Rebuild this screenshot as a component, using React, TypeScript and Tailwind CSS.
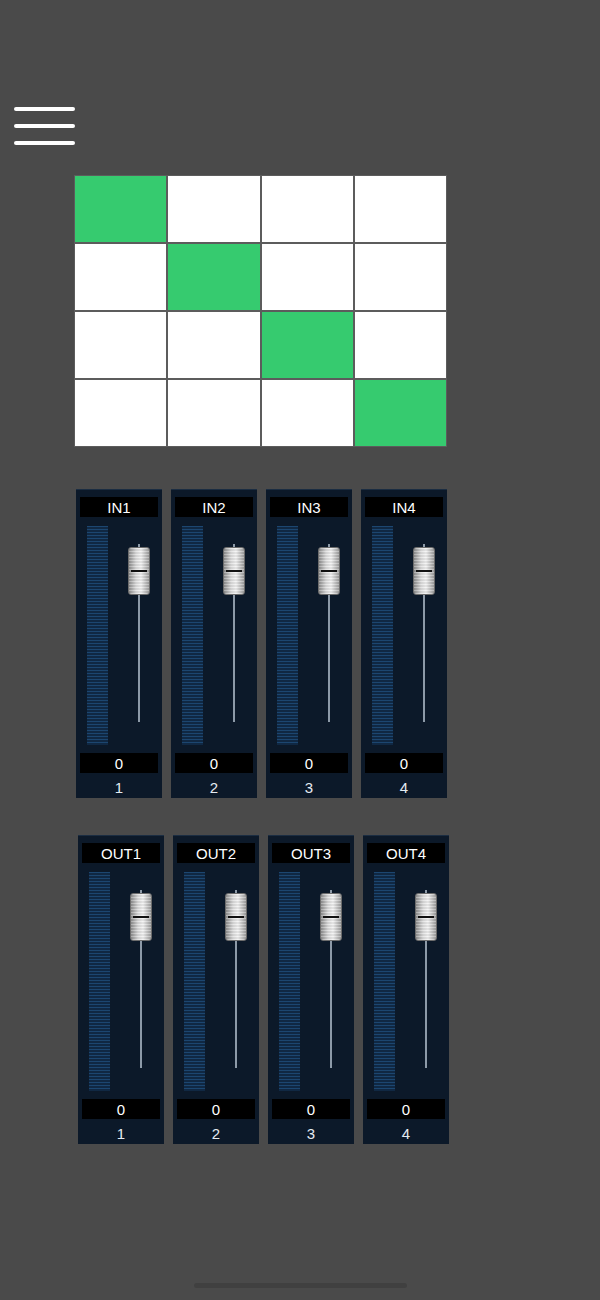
import React from "react";

const font = { fontFamily: '"Liberation Sans", Arial, sans-serif' };

function Strip({ label, num }: { label: string; num: number }) {
  return (
    <div className="flex flex-col w-[86px] h-[309px] bg-[#0c1929] border-t border-[#1b2d42] px-[4px] pt-[7px]">
      <div className="h-[20px] bg-black flex items-center justify-center text-white text-[15px] leading-none">
        {label}
      </div>
      <div className="flex flex-row h-[219px] mt-[9px]">
        <div className="ml-[7px] w-[21px] h-full bg-[repeating-linear-gradient(to_bottom,#1c4670_0px,#1c4670_1px,#102843_1px,#102843_3px)]" />
        <div className="relative ml-[20px] w-[22px] h-full">
          <div className="absolute left-[10px] top-[18px] w-[2px] h-[178px] bg-[#8d9aa8]" />
          <div className="absolute left-0 top-[21px] w-[22px] h-[48px] rounded-[3px] border border-[#6c6c6c] bg-[repeating-linear-gradient(to_bottom,rgba(255,255,255,0.25)_0px,rgba(255,255,255,0.25)_1px,rgba(0,0,0,0.06)_1px,rgba(0,0,0,0.06)_3px),linear-gradient(to_right,#8e8e8e,#dcdcdc_35%,#f2f2f2_60%,#a0a0a0)] flex items-start justify-center">
            <div className="mt-[22px] w-[16px] h-[2px] bg-[#111]" />
          </div>
        </div>
      </div>
      <div className="mt-[8px] h-[20px] bg-black flex items-center justify-center text-white text-[15px] leading-none">
        0
      </div>
      <div className="h-[25px] pt-[4px] flex items-center justify-center text-[#e4ebf2] text-[15px] leading-none">
        {num}
      </div>
    </div>
  );
}

export default function App() {
  const n = [0, 1, 2, 3];
  return (
    <div className="w-[600px] h-[1300px] bg-[#4a4a4a] flex flex-col" style={font}>
      <div className="ml-[14px] mt-[107px] flex flex-col gap-[13px] w-[61px]">
        <div className="h-[4px] rounded-full bg-white" />
        <div className="h-[4px] rounded-full bg-white" />
        <div className="h-[4px] rounded-full bg-white" />
      </div>
      <div className="ml-[74px] mt-[30px] w-[373px] h-[272px] grid grid-cols-4 grid-rows-4 gap-[2px] bg-[#5c5c5c] border border-[#5c5c5c]">
        {n.map((r) =>
          n.map((c) => (
            <div key={`${r}-${c}`} className={r === c ? "bg-[#36cb6f]" : "bg-white"} />
          ))
        )}
      </div>
      <div className="ml-[76px] mt-[42px] flex flex-row gap-[9px]">
        {n.map((i) => (
          <Strip key={i} label={`IN${i + 1}`} num={i + 1} />
        ))}
      </div>
      <div className="ml-[78px] mt-[37px] flex flex-row gap-[9px]">
        {n.map((i) => (
          <Strip key={i} label={`OUT${i + 1}`} num={i + 1} />
        ))}
      </div>
      <div className="mt-auto mb-[12px] mx-auto w-[213px] h-[5px] rounded-full bg-[#404040]" />
    </div>
  );
}
